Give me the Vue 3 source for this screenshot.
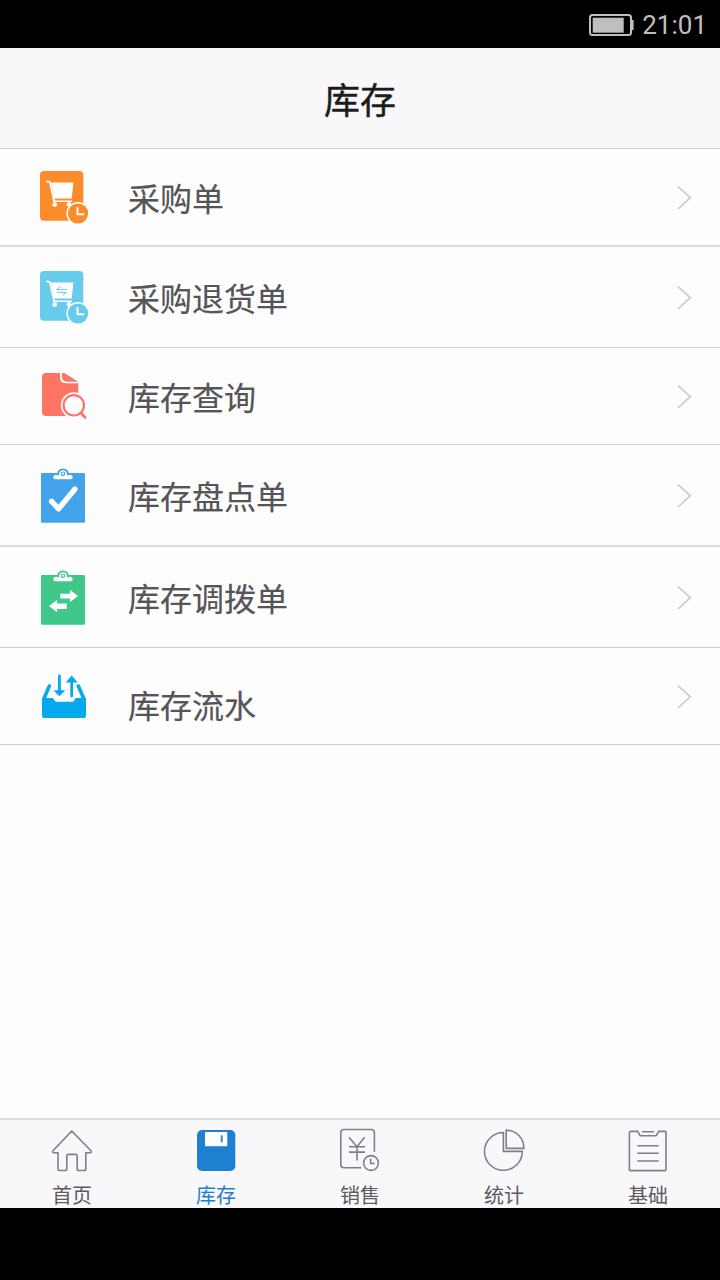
<template>
  <div class="screen">
    <div class="status-bar">
      <svg class="battery" width="46" height="24" viewBox="0 0 46 24">
        <rect x="2" y="2" width="41" height="20" rx="2.5" fill="none" stroke="#c1bec1" stroke-width="2" />
        <rect x="4.7" y="4.7" width="31" height="15" fill="#c1bec1" />
        <path d="M43 7h2.6v10H43z" fill="#c1bec1" />
      </svg>
      <span class="time">21:01</span>
    </div>

    <header class="title-bar">库存</header>

    <ul class="menu">
      <li v-for="item in menu" :key="item.name" class="menu-item" :class="item.icon">
        <svg class="menu-icon" width="60" height="60" viewBox="0 0 60 60">
          <g v-if="item.icon === 'purchase' || item.icon === 'refund'">
            <rect x="6" y="4" width="43.3" height="49.7" rx="4" fill="currentColor" />
            <path d="M12.9 14.3l3 .9 4.2 18.8" class="line" stroke-width="1.8" />
            <path d="M17 15.5h22.4l-1.7 16H20.3z" fill="#fff" />
            <path d="M19.5 34.2h18" class="line" stroke-width="1.4" />
            <circle cx="20.8" cy="37.6" r="2.4" fill="#fff" />
            <circle cx="35" cy="37.4" r="2.4" fill="#fff" />
            <path v-if="item.icon === 'refund'" d="M33 22.6H22.5l4-3M22.6 25.3h10l-4 3" fill="none" stroke="currentColor" stroke-width="1" />
            <circle cx="44" cy="46.5" r="11.6" fill="#fff" />
            <circle cx="44" cy="46.5" r="10.1" fill="currentColor" />
            <path d="M43.5 41v6.2h6" class="line" stroke-width="1.9" />
          </g>
          <g v-else-if="item.icon === 'query'">
            <path d="M12 7h14v4.5q0 5.7 6 5.7h12.3V50H12q-4 0-4-4V11q0-4 4-4z" fill="currentColor" />
            <path d="M28 7h2.3l14 8.8H34q-6 0-6-5.5z" fill="currentColor" />
            <circle cx="39.8" cy="39.3" r="13" fill="#fff" />
            <path d="M42 46l8.5 9 4-4z" fill="#fff" />
            <circle cx="39.8" cy="39.3" r="10.2" fill="none" stroke="currentColor" stroke-width="2.2" />
            <path d="M47 47l4 4.4" fill="none" stroke="currentColor" stroke-width="2.8" stroke-linecap="round" />
          </g>
          <g v-else-if="item.icon === 'check' || item.icon === 'transfer'">
            <rect x="7" y="8" width="44" height="49.7" rx="1" fill="currentColor" />
            <path d="M19.3 12.5q0-2.6 3.5-2.8h12.4q3.5.2 3.5 2.8 0 1.7-2 1.7H21.3q-2 0-2-1.7z" fill="#fff" />
            <path d="M22.8 10.2q.6-6.8 6.2-6.8t6.2 6.8z" fill="currentColor" />
            <path d="M24.9 10.5q.2-5.3 4.1-5.3t4.1 5.3z" fill="#fff" />
            <circle cx="29" cy="8.7" r="1.7" fill="none" stroke="currentColor" stroke-width="1.1" />
            <path v-if="item.icon === 'check'" d="M17.6 36.3l7 7.5L41 24" class="line" stroke-width="5.4" />
            <path v-else d="M26.3 26.7H36V22.7l8 6.3-8 6v-3.5h-9.7zM32.7 36.6H23v-3.7L15 39l8 6.2v-3.3h9.7z" fill="#fff" />
          </g>
          <g v-else fill="currentColor">
            <path d="M8 32h10.8l2.9 3.8h17.6l2.4-3.8H52v18q0 2-2 2H10q-2 0-2-2z" />
            <path d="M15.3 20L9.8 33M44.3 20l5.7 13" fill="none" stroke="currentColor" stroke-width="3.6" stroke-linecap="round" />
            <path d="M25.4 10v15M37.7 30V16" fill="none" stroke="currentColor" stroke-width="2.8" stroke-linecap="round" />
            <path d="M19.4 24.2h12l-6 6zM31.7 16.5h12l-6-7z" />
          </g>
        </svg>
        <span class="label">{{ item.name }}</span>
        <svg class="chevron" width="16" height="26" viewBox="0 0 16 26">
          <path d="M2 2.7l12.3 11L2 25" fill="none" stroke="#cac8cc" stroke-width="1.6" />
        </svg>
      </li>
    </ul>

    <nav class="tab-bar">
      <div v-for="tab in tabs" :key="tab.name" class="tab" :class="{ active: tab.icon === current }">
        <svg width="48" height="48" viewBox="0 0 48 48" fill="none" stroke="#7b808b" stroke-width="1.6">
          <path v-if="tab.icon === 'home'" stroke-linejoin="round" d="M23.7 4L5 23.7q-.8 1.8 1 2H10v16q0 1.8 1.8 1.8h5.4q1.6 0 1.6-1.8V29q0-1.6 1.6-1.6h7.2q1.6 0 1.6 1.6v12.7q0 1.8 1.6 1.8H36q1.8 0 1.8-1.8v-16h4.2q1.8-.2 1-2z" />
          <g v-else-if="tab.icon === 'stock'" stroke="none">
            <rect x="5" y="3" width="38.3" height="41" rx="5" fill="#1e80d0" />
            <rect x="13" y="5" width="22.3" height="14.3" rx="1" fill="#fff" />
            <path d="M28.7 8.3h2v7h-2z" fill="#4f86b5" />
          </g>
          <g v-else-if="tab.icon === 'sales'">
            <path d="M25.3 40.8H8q-3.2 0-3.2-3.2V5.7q0-3.2 3.2-3.2h27.2q3.2 0 3.2 3.2v19" />
            <path d="M13 10.3l8 9.4 7.6-9.4M13 19.8h16M13 25.1h16M21 19.8v13.6" />
            <circle cx="35" cy="36" r="7.4" />
            <path d="M34.6 31.5v5h4.2" />
          </g>
          <g v-else-if="tab.icon === 'stats'">
            <path d="M23.4 5.5a18.9 18.9 0 1 0 18.9 18.9H23.4z" />
            <path d="M26.2 3.2a17.6 17.6 0 0 1 17.6 18.2H26.2z" />
          </g>
          <g v-else>
            <path d="M7 4.4h6.5l2.7 4.3h15.9l2.7-4.3h6.4q.8 0 .8.8v37.6q0 .8-.8.8H6.2q-.8 0-.8-.8V6q0-1.6 1.6-1.6zM18 4.7h12M13.3 18.8h21.4M13.3 26.3h21.4M13.3 34h21.4" />
          </g>
        </svg>
        <span class="tab-name">{{ tab.name }}</span>
      </div>
    </nav>

    <div class="system-bar"></div>
  </div>
</template>

<script setup>
  import { ref } from 'vue';

  const menu = [
    { name: '采购单', icon: 'purchase' },
    { name: '采购退货单', icon: 'refund' },
    { name: '库存查询', icon: 'query' },
    { name: '库存盘点单', icon: 'check' },
    { name: '库存调拨单', icon: 'transfer' },
    { name: '库存流水', icon: 'flow' }
  ];

  const tabs = [
    { name: '首页', icon: 'home' },
    { name: '库存', icon: 'stock' },
    { name: '销售', icon: 'sales' },
    { name: '统计', icon: 'stats' },
    { name: '基础', icon: 'base' }
  ];

  const current = ref('stock');
</script>

<style>
  body {
    margin: 0;
  }
</style>

<style scoped>
  .screen {
    display: flex;
    flex-direction: column;
    width: 720px;
    height: 1280px;
    background-color: #fdfdfd;
    font-family: "Noto Sans CJK SC", sans-serif;
  }

  .status-bar {
    display: flex;
    align-items: center;
    justify-content: flex-end;
    height: 48px;
    padding: 2px 13px 0 0;
    box-sizing: border-box;
    gap: 8px;
    background-color: #000;
  }

  .time {
    color: #c1bec1;
    font-family: Roboto, sans-serif;
    font-size: 26px;
    line-height: 46px;
  }

  .title-bar {
    height: 100px;
    border-bottom: 1px solid #d2d1d4;
    background-color: #f8f7fa;
    color: #1c1c1e;
    font-size: 36px;
    line-height: 100px;
    text-align: center;
    -webkit-text-stroke: 0.4px #1c1c1e;
  }

  .menu {
    flex: 1;
    margin: 0;
    padding: 0;
    list-style: none;
  }

  .menu-item {
    display: flex;
    align-items: center;
    height: 96px;
    padding: 0 28px 0 34px;
    border-bottom: 1px solid #cfcfcf;
  }

  .label {
    flex: 1;
    margin-left: 34px;
    padding-bottom: 1px;
    color: #555456;
    font-size: 32px;
    line-height: 46px;
    -webkit-text-stroke: 0.2px #555456;
  }

  .purchase {
    color: #fc8b2a;
    border-bottom: 2px solid #dcdcdc;
  }

  .refund {
    height: 100px;
    color: #67cbec;
  }

  .query {
    color: #fd7465;
  }

  .check {
    height: 100px;
    color: #43a2ea;
    border-bottom: 2px solid #dcdcdc;
  }

  .transfer {
    height: 100px;
    color: #3fc88a;
  }

  .flow {
    color: #06a8ee;
  }

  .flow .label {
    padding-top: 16px;
  }

  .line {
    fill: none;
    stroke: #fff;
    stroke-linecap: round;
    stroke-linejoin: round;
  }

  .tab-bar {
    display: flex;
    height: 88px;
    border-top: 2px solid #dddcdf;
    background-color: #f8f7fa;
  }

  .tab {
    display: flex;
    flex: 1;
    flex-direction: column;
    align-items: center;
    padding-top: 7px;
    color: #5c5b5f;
  }

  .tab-name {
    margin-top: 6px;
    font-size: 20px;
    line-height: 27px;
  }

  .active {
    color: #1e80d0;
  }

  .system-bar {
    height: 72px;
    background-color: #000;
  }
</style>
